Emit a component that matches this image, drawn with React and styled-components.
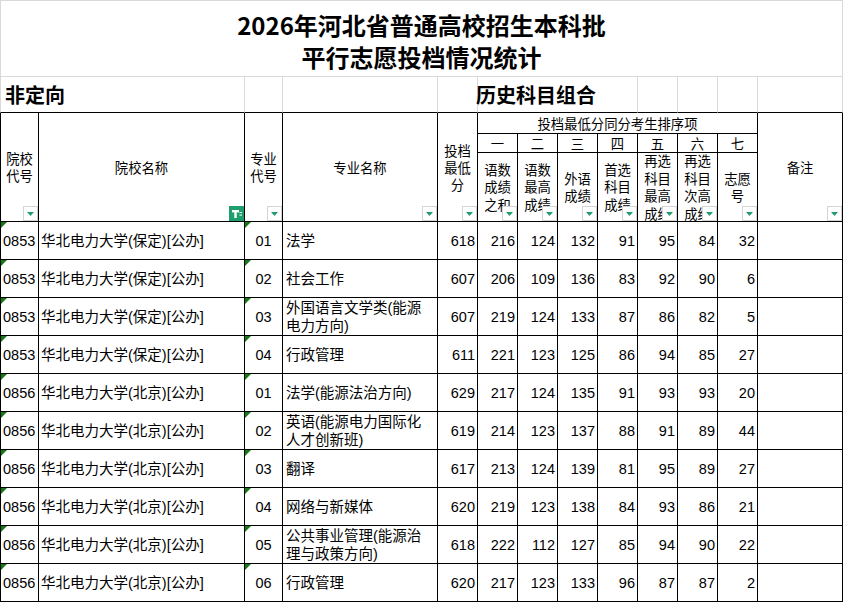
import React from "react";
import styled, { createGlobalStyle } from "styled-components";

const GlobalStyle = createGlobalStyle`
  html, body {
    margin: 0;
    padding: 0;
    background: #fff;
  }
  body {
    font-family: "Liberation Sans", "Noto Sans CJK SC", sans-serif;
    color: #000;
  }
`;

const GRID = "#d9d9d9";
const GREEN = "#1e9e6c";

const Sheet = styled.div`
  display: grid;
  grid-template-columns: 39px 206px 38px 155px 40px repeat(7, 40px) 85px;
  grid-template-rows: 77px 36px 21px 19px 69px repeat(10, 38px);
  width: 843px;
  overflow: hidden;
`;

const TitleCell = styled.div`
  grid-column: 1 / -1;
  box-sizing: border-box;
  border: 1px solid ${GRID};
  display: flex;
  flex-direction: column;
  align-items: center;
  justify-content: center;
  padding-top: 4px;
  font-family: "Noto Sans CJK SC", sans-serif;
  font-weight: 700;
  font-size: 24px;
  line-height: 32px;
`;

const BandCell = styled.div`
  grid-column: span ${(p) => p.$span || 1};
  box-sizing: border-box;
  border-right: 1px solid ${GRID};
  border-left: ${(p) => (p.$first ? `1px solid ${GRID}` : "none")};
  border-bottom: 1px solid #000;
  display: flex;
  align-items: center;
  padding-left: ${(p) => p.$indent || 0}px;
  text-indent: ${(p) => p.$shift || 0}px;
  font-family: "Noto Sans CJK SC", sans-serif;
  font-weight: 700;
  font-size: 20px;
  white-space: nowrap;
`;

const HeadCell = styled.div`
  grid-column: ${(p) => p.$col};
  grid-row: ${(p) => p.$row};
  position: relative;
  box-sizing: border-box;
  border-right: 1px solid #000;
  border-bottom: 1px solid #000;
  border-left: ${(p) => (p.$first ? "1px solid #000" : "none")};
  display: flex;
  align-items: center;
  justify-content: center;
  overflow: hidden;
  padding: 0 3px;
  font-family: "Noto Sans CJK SC", sans-serif;
  font-size: 13.33px;
  line-height: ${(p) => (p.$tall ? "17.5px" : "17px")};
  text-align: center;
`;

const HeadText = styled.span`
  display: block;
  width: 100%;
`;

const DropBtn = styled.span`
  position: absolute;
  right: 0;
  bottom: 0;
  width: 15px;
  height: 15px;
  box-sizing: border-box;
  border: 1px solid ${(p) => (p.$active ? GREEN : "#d4d4d4")};
  background: ${(p) => (p.$active ? GREEN : "#fff")};
  display: flex;
  align-items: center;
  justify-content: center;
`;

const DataCell = styled.div`
  position: relative;
  box-sizing: border-box;
  border-right: 1px solid #000;
  border-bottom: 1px solid #000;
  border-left: ${(p) => (p.$first ? "1px solid #000" : "none")};
  display: flex;
  align-items: center;
  justify-content: ${(p) =>
    p.$align === "right" ? "flex-end" : p.$align === "center" ? "center" : "flex-start"};
  padding: ${(p) => p.$pad || "0 2px"};
  overflow: hidden;
  font-size: 14.5px;
  line-height: 18px;
  white-space: ${(p) => (p.$wrap ? "normal" : "nowrap")};

  &::before {
    content: "";
    display: ${(p) => (p.$tick ? "block" : "none")};
    position: absolute;
    top: 0;
    left: 0;
    border-top: 6px solid #137a13;
    border-right: 6px solid transparent;
  }
`;

const Arrow = () => (
  <svg width="13" height="13" viewBox="0 0 13 13">
    <polygon points="3,5 10,5 6.5,9" fill={GREEN} />
  </svg>
);

const Funnel = () => (
  <svg width="13" height="13" viewBox="0 0 13 13">
    <rect x="2" y="3" width="7" height="2.4" fill="#fff" />
    <rect x="4.3" y="5" width="2.4" height="6" fill="#fff" />
    <rect x="9.5" y="5" width="2.5" height="1" fill="#fff" />
    <rect x="9.5" y="7.6" width="2.5" height="1" fill="#fff" />
  </svg>
);

const Drop = ({ active }) => (
  <DropBtn $active={active}>{active ? <Funnel /> : <Arrow />}</DropBtn>
);

const BJ = "华北电力大学(北京)[公办]";
const BD = "华北电力大学(保定)[公办]";

const rows = [
  ["0853", BD, "01", "法学", [618, 216, 124, 132, 91, 95, 84, 32]],
  ["0853", BD, "02", "社会工作", [607, 206, 109, 136, 83, 92, 90, 6]],
  ["0853", BD, "03", "外国语言文学类(能源电力方向)", [607, 219, 124, 133, 87, 86, 82, 5]],
  ["0853", BD, "04", "行政管理", [611, 221, 123, 125, 86, 94, 85, 27]],
  ["0856", BJ, "01", "法学(能源法治方向)", [629, 217, 124, 135, 91, 93, 93, 20]],
  ["0856", BJ, "02", "英语(能源电力国际化人才创新班)", [619, 214, 123, 137, 88, 91, 89, 44]],
  ["0856", BJ, "03", "翻译", [617, 213, 124, 139, 81, 95, 89, 27]],
  ["0856", BJ, "04", "网络与新媒体", [620, 219, 123, 138, 84, 93, 86, 21]],
  ["0856", BJ, "05", "公共事业管理(能源治理与政策方向)", [618, 222, 112, 127, 85, 94, 90, 22]],
  ["0856", BJ, "06", "行政管理", [620, 217, 123, 133, 96, 87, 87, 2]],
];

const orders = ["一", "二", "三", "四", "五", "六", "七"];
const orderLabels = [
  "语数成绩之和",
  "语数最高成绩",
  "外语成绩",
  "首选科目成绩",
  "再选科目最高成绩",
  "再选科目次高成绩",
  "志愿号",
];

export default function App() {
  return (
    <>
      <GlobalStyle />
      <Sheet>
        <TitleCell>
          <div>2026年河北省普通高校招生本科批</div>
          <div>平行志愿投档情况统计</div>
        </TitleCell>

        <BandCell $first $span={2} $indent={4}>非定向</BandCell>
        <BandCell />
        <BandCell />
        <BandCell />
        <BandCell $span={4} $shift={-2}>历史科目组合</BandCell>
        <BandCell />
        <BandCell />
        <BandCell />
        <BandCell />

        <HeadCell $first $col="1" $row="3 / span 3">
          <HeadText>院校代号</HeadText>
          <Drop />
        </HeadCell>
        <HeadCell $col="2" $row="3 / span 3">
          <HeadText>院校名称</HeadText>
          <Drop active />
        </HeadCell>
        <HeadCell $col="3" $row="3 / span 3">
          <HeadText>专业代号</HeadText>
          <Drop />
        </HeadCell>
        <HeadCell $col="4" $row="3 / span 3">
          <HeadText>专业名称</HeadText>
          <Drop />
        </HeadCell>
        <HeadCell $col="5" $row="3 / span 3">
          <HeadText>投档最低分</HeadText>
          <Drop />
        </HeadCell>
        <HeadCell $col="6 / span 7" $row="3">
          <HeadText>投档最低分同分考生排序项</HeadText>
        </HeadCell>
        <HeadCell $col="13" $row="3 / span 3">
          <HeadText>备注</HeadText>
          <Drop />
        </HeadCell>
        {orders.map((o, i) => (
          <HeadCell key={o} $col={`${6 + i}`} $row="4">
            <HeadText>{o}</HeadText>
          </HeadCell>
        ))}
        {orderLabels.map((l, i) => (
          <HeadCell key={l} $col={`${6 + i}`} $row="5" $tall>
            <HeadText>{l}</HeadText>
            <Drop />
          </HeadCell>
        ))}

        {rows.map(([code, school, mcode, major, scores], i) => (
          <React.Fragment key={i}>
            <DataCell $first $tick>{code}</DataCell>
            <DataCell>{school}</DataCell>
            <DataCell $align="center" $tick>{mcode}</DataCell>
            <DataCell $wrap $pad="0 4px 0 3px">{major}</DataCell>
            {scores.map((s, j) => (
              <DataCell key={j} $align="right">{s}</DataCell>
            ))}
            <DataCell />
          </React.Fragment>
        ))}
      </Sheet>
    </>
  );
}
